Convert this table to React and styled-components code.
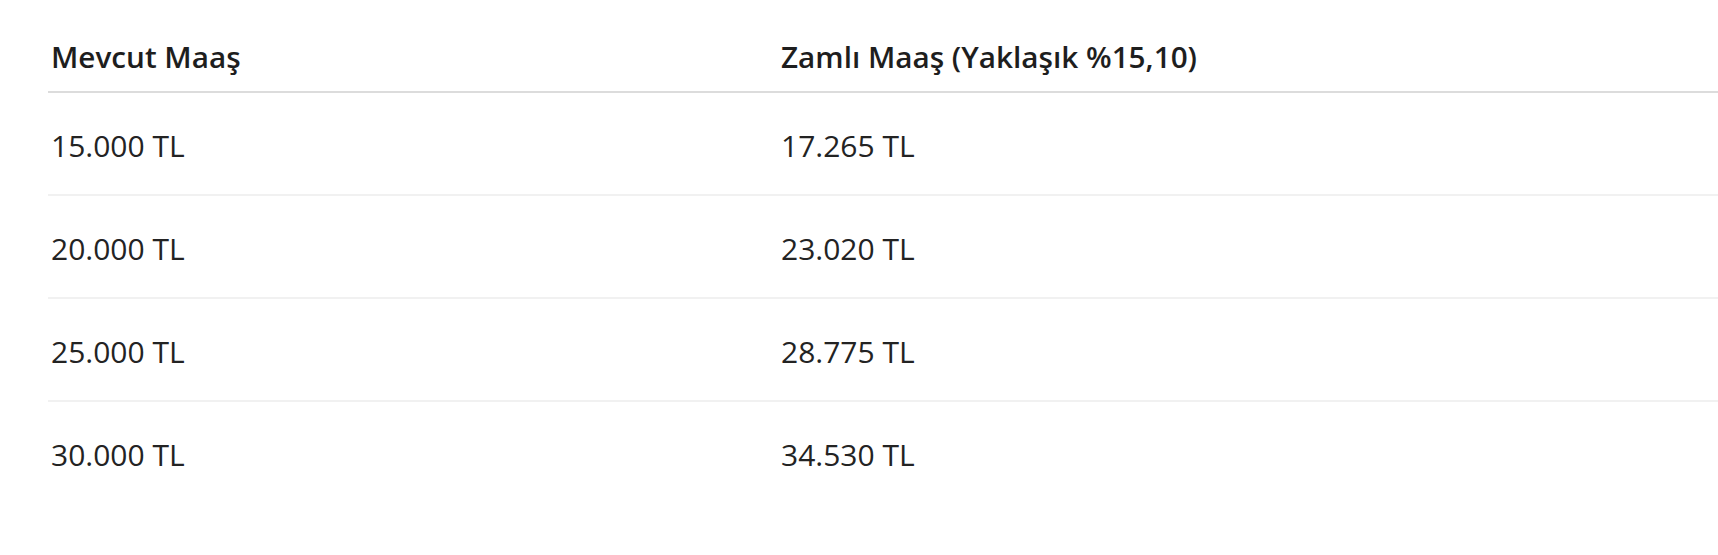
import React from "react";
import styled, { createGlobalStyle } from "styled-components";

const GlobalStyle = createGlobalStyle`
  html, body {
    margin: 0;
    padding: 0;
    background: #ffffff;
    overflow: hidden;
  }
  body {
    font-family: "Open Sans", "Noto Sans", "Liberation Sans", sans-serif;
    color: #222222;
  }
`;

const Page = styled.div`
  width: 1718px;
  height: 555px;
  padding-left: 48px;
  box-sizing: border-box;
  overflow: hidden;
`;

const Table = styled.table`
  width: 1700px;
  border-collapse: collapse;
  table-layout: fixed;
`;

const HeadCell = styled.th`
  text-align: left;
  font-size: 29.7px;
  font-weight: 600;
  line-height: 43px;
  color: #1e1e1e;
  padding: 35px 0 13px 3px;
  border-bottom: 2px solid #dcdcdc;
  width: ${(p) => p.$width || "auto"};
`;

const Row = styled.tr`
  border-bottom: ${(p) => (p.$last ? "none" : "2px solid #f1f1f1")};
`;

const Cell = styled.td`
  font-size: 30px;
  font-weight: 400;
  line-height: 43px;
  color: #232323;
  padding: 31px 0 27px 3px;
`;

const rows = [
  ["15.000 TL", "17.265 TL"],
  ["20.000 TL", "23.020 TL"],
  ["25.000 TL", "28.775 TL"],
  ["30.000 TL", "34.530 TL"],
];

const App = () => {
  return (
    <>
      <GlobalStyle />
      <Page>
        <Table>
          <thead>
            <tr>
              <HeadCell $width="727px">Mevcut Maaş</HeadCell>
              <HeadCell>Zamlı Maaş (Yaklaşık %15,10)</HeadCell>
            </tr>
          </thead>
          <tbody>
            {rows.map((r, i) => (
              <Row key={r[0]} $last={i === rows.length - 1}>
                <Cell>{r[0]}</Cell>
                <Cell>{r[1]}</Cell>
              </Row>
            ))}
          </tbody>
        </Table>
      </Page>
    </>
  );
};

export default App;
